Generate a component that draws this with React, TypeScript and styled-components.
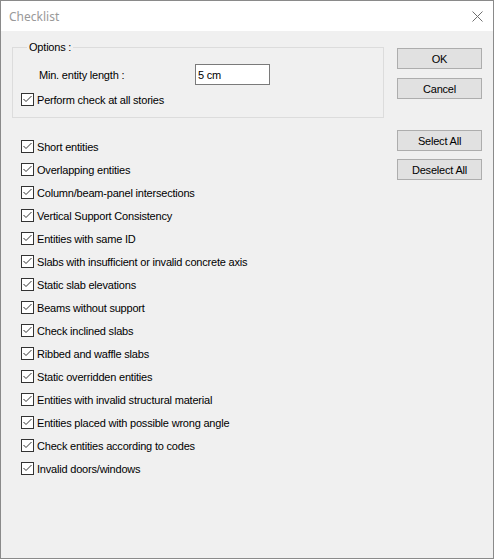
import styled, { createGlobalStyle } from "styled-components";

const GlobalStyle = createGlobalStyle`
  html, body {
    margin: 0;
    padding: 0;
    background: #ffffff;
  }
  body {
    font-family: "Liberation Sans", Arial, sans-serif;
    font-size: 11px;
    letter-spacing: -0.2px;
    color: #000;
  }
`;

const checks = [
  "Short entities",
  "Overlapping entities",
  "Column/beam-panel intersections",
  "Vertical Support Consistency",
  "Entities with same ID",
  "Slabs with insufficient or invalid concrete axis",
  "Static slab elevations",
  "Beams without support",
  "Check inclined slabs",
  "Ribbed and waffle slabs",
  "Static overridden entities",
  "Entities with invalid structural material",
  "Entities placed with possible wrong angle",
  "Check entities according to codes",
  "Invalid doors/windows",
];

function CheckBox({ label }: { label: string }) {
  return (
    <CheckRow>
      <Box>
        <svg width="11" height="11" viewBox="0 0 11 11">
          <polyline points="1.5,5 4,7.5 9.5,2" fill="none" stroke="#333" strokeWidth="1" />
        </svg>
      </Box>
      <CheckText>{label}</CheckText>
    </CheckRow>
  );
}

export default function App() {
  return (
    <>
      <GlobalStyle />
      <Window>
        <TitleBar>
          <Title>Checklist</Title>
          <Close>
            <svg width="11" height="11" viewBox="0 0 11 11">
              <path d="M0.5 0.5 L10.5 10.5 M10.5 0.5 L0.5 10.5" stroke="#6f6f6f" strokeWidth="1" />
            </svg>
          </Close>
        </TitleBar>
        <Body>
          <LeftColumn>
            <GroupBox>
              <Legend>Options :</Legend>
              <FieldRow>
                <FieldLabel>Min. entity length :</FieldLabel>
                <TextInput>5 cm</TextInput>
              </FieldRow>
              <CheckBox label="Perform check at all stories" />
            </GroupBox>
            <CheckList>
              {checks.map((c) => (
                <CheckItem key={c}>
                  <CheckBox label={c} />
                </CheckItem>
              ))}
            </CheckList>
          </LeftColumn>
          <RightColumn>
            <Button>OK</Button>
            <Button>Cancel</Button>
            <Spacer />
            <Button>Select All</Button>
            <Button $tight>Deselect All</Button>
          </RightColumn>
        </Body>
      </Window>
    </>
  );
}

const Window = styled.div`
  width: 494px;
  height: 559px;
  box-sizing: border-box;
  border: 1px solid #8a8a8a;
  display: flex;
  flex-direction: column;
  background: #f0f0f0;
`;

const TitleBar = styled.div`
  height: 30px;
  background: #fff;
  display: flex;
  align-items: center;
  justify-content: space-between;
  padding: 0 9px 0 8px;
  flex-shrink: 0;
`;

const Title = styled.div`
  font-family: "Noto Sans", "Open Sans", sans-serif;
  font-size: 12px;
  letter-spacing: 0;
  color: #999;
  margin-top: 1px;
`;

const Close = styled.div`
  width: 11px;
  height: 11px;
  display: flex;
  margin-right: 1px;
  margin-top: 1px;
`;

const Body = styled.div`
  flex: 1;
  display: flex;
  background: #f0f0f0;
`;

const LeftColumn = styled.div`
  width: 372px;
  margin-left: 11px;
  display: flex;
  flex-direction: column;
`;

const GroupBox = styled.fieldset`
  margin: 10px 0 0 0;
  width: 372px;
  box-sizing: border-box;
  border: 1px solid #dcdcdc;
  padding: 0 0 10px 8px;
  min-width: 0;
`;

const Legend = styled.legend`
  margin-left: 6px;
  padding: 0 2px;
  line-height: 13px;
  font-size: 11px;
`;

const FieldRow = styled.div`
  display: flex;
  align-items: center;
  margin: 10px 0 7px 18px;
`;

const FieldLabel = styled.div`
  width: 156px;
  padding-top: 1px;
`;

const TextInput = styled.div`
  width: 75px;
  height: 21px;
  box-sizing: border-box;
  border: 1px solid #7a7a7a;
  background: #fff;
  padding: 0 2px;
  display: flex;
  align-items: center;
`;

const CheckRow = styled.div`
  display: flex;
  align-items: center;
  height: 15px;
`;

const Box = styled.span`
  width: 13px;
  height: 13px;
  box-sizing: border-box;
  border: 1px solid #333;
  background: #fff;
  display: flex;
  align-items: center;
  justify-content: center;
  flex-shrink: 0;
`;

const CheckText = styled.span`
  margin-left: 3px;
  white-space: nowrap;
`;

const CheckList = styled.div`
  display: flex;
  flex-direction: column;
  margin-top: 17px;
  padding-left: 9px;
`;

const CheckItem = styled.div`
  height: 23px;
  display: flex;
  align-items: center;
`;

const RightColumn = styled.div`
  margin-left: 13px;
  padding-top: 17px;
  display: flex;
  flex-direction: column;
  gap: 9px;
`;

const Spacer = styled.div`
  height: 13px;
`;

const Button = styled.div<{ $tight?: boolean }>`
  width: 85px;
  height: 21px;
  box-sizing: border-box;
  border: 1px solid #adadad;
  background: #e1e1e1;
  display: flex;
  align-items: center;
  justify-content: center;
  font-size: 11px;
  margin-top: ${(p) => (p.$tight ? "-1px" : "0")};
`;
